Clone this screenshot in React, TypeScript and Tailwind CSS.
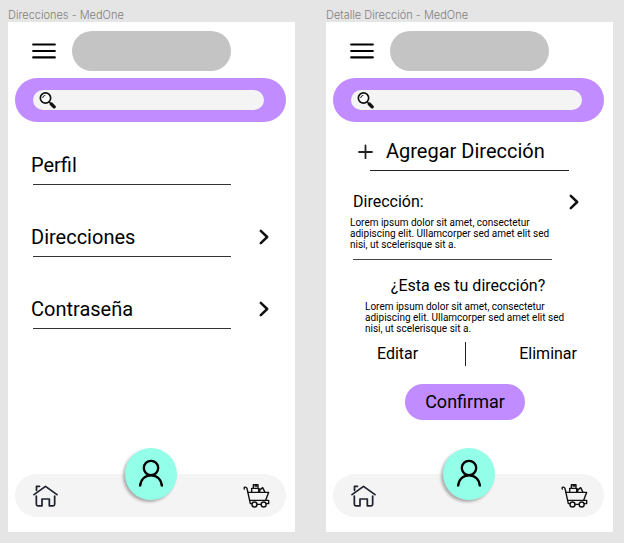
import type { ReactNode } from "react";

function MenuIcon() {
  return (
    <svg className="h-4 w-6" viewBox="0 0 24 16" fill="none" stroke="#000" strokeWidth="2.2" strokeLinecap="round" aria-hidden="true">
      <path d="M1.2 1.5H22.8M1.2 8H22.8M1.2 14.4H22.8" />
    </svg>
  );
}

function SearchIcon() {
  return (
    <svg className="size-[17px] shrink-0" viewBox="27 18 51 51" fill="none" stroke="#111" aria-hidden="true">
      <circle cx="46.500" cy="36" r="15.500" strokeWidth="5" fill="#fff" />
      <path d="M38 36A9 9 0 0 1 46 28" strokeWidth="3" />
      <path d="M58 48L63 53" strokeWidth="4" />
      <path d="M64 54L72.500 62.500" strokeWidth="10" strokeLinecap="round" />
    </svg>
  );
}

function HomeIcon() {
  return (
    <svg className="h-[22px] w-[25px]" viewBox="24 30 75 66" fill="none" stroke="#20232f" strokeWidth="5.200" strokeLinecap="round" strokeLinejoin="round" aria-hidden="true">
      <path d="M27 59L61.500 34L96 59" />
      <path d="M34.500 46V34H43.500" />
      <path d="M34 63V88Q34 92.500 38.500 92.500H51V72H73V92.500H84.500Q89 92.500 89 88V63" />
    </svg>
  );
}

function CartIcon() {
  return (
    <svg className="h-[25px] w-[27px]" viewBox="20 24 81 75" fill="none" stroke="#111" strokeWidth="4.200" strokeLinecap="round" strokeLinejoin="round" aria-hidden="true">
      <path d="M24 42C21 36 29 34 32 40L42 86H47" />
      <path d="M34.500 52H97L88 76H40" />
      <path d="M88 76H97V86H90M62 88H74" />
      <circle cx="54.500" cy="88.500" r="7.500" />
      <circle cx="82" cy="88.500" r="7.500" />
      <path d="M46 51V40H67V51M51 39V29H65V39M56 33H61M69 46L79 38L85 50M70 51V42" />
    </svg>
  );
}

function UserIcon() {
  return (
    <svg className="h-[30px] w-[26px]" viewBox="0 0 26 30" fill="none" stroke="#000" strokeWidth="2.300" aria-hidden="true">
      <circle cx="13" cy="9" r="7.200" />
      <path d="M2 27.500C2.500 20.500 7 16.300 13 16.300S23.500 20.500 24 27.500" />
    </svg>
  );
}

function Chevron() {
  return (
    <svg className="h-4 w-[10px]" viewBox="0 0 10 16" fill="none" stroke="#111" strokeWidth="2.500" strokeLinecap="round" strokeLinejoin="round" aria-hidden="true">
      <path d="M1.800 1.800L8.200 8L1.800 14.200" />
    </svg>
  );
}

function PlusIcon() {
  return (
    <svg className="size-4" viewBox="0 0 16 16" fill="none" stroke="#222" strokeWidth="1.800" strokeLinecap="round" aria-hidden="true">
      <path d="M7.500 2.500V15.200M1 9H14" />
    </svg>
  );
}

function Screen({ id, title, children }: { id: string; title: string; children: ReactNode }) {
  return (
    <section className="flex min-w-0 flex-col" aria-labelledby={`${id}-title`}>
      <h2 id={`${id}-title`} className="font-['Inter',sans-serif] text-[11px] leading-[14px] font-light text-[#808080]">
        {title}
      </h2>
      <div className="flex flex-1 flex-col bg-white pt-[9px] pb-[15px]">
        <header>
          <div className="flex items-center gap-4 pr-16 pl-6">
            <button type="button" aria-label="Menú">
              <MenuIcon />
            </button>
            <div className="h-10 flex-1 rounded-full bg-[#c4c4c4]" />
          </div>
          <form role="search" className="mt-[7px] mr-[9px] ml-[7px] rounded-full bg-[#c08cff] py-3 pr-[22px] pl-[18px]">
            <label htmlFor={`${id}-search`} className="flex h-5 items-center rounded-full bg-[#f4f4f4] pl-[6px]">
              <SearchIcon />
              <input id={`${id}-search`} type="search" aria-label="Buscar" className="min-w-0 flex-1 bg-transparent px-2 text-[11px] outline-none" />
            </label>
          </form>
        </header>
        <main className="flex-1">{children}</main>
        <nav className="relative mr-[9px] ml-[7px] flex h-[43px] items-center justify-between rounded-full bg-[#f4f4f4] pr-4 pl-[18px]">
          <a href="#inicio" aria-label="Inicio">
            <HomeIcon />
          </a>
          <a
            href="#perfil"
            aria-label="Perfil"
            className="absolute inset-x-0 bottom-[17px] mx-auto flex size-[52px] items-center justify-center rounded-full bg-[#94ffe8] shadow-[-2px_2px_3px_rgba(0,0,0,0.3)]"
          >
            <UserIcon />
          </a>
          <a href="#carrito" aria-label="Carrito">
            <CartIcon />
          </a>
        </nav>
      </div>
    </section>
  );
}

const options = [
  { label: "Perfil", arrow: false },
  { label: "Direcciones", arrow: true },
  { label: "Contraseña", arrow: true },
];

const address = "Lorem ipsum dolor sit amet, consectetur adipiscing elit. Ullamcorper sed amet elit sed nisi, ut scelerisque sit a.";

export default function App() {
  return (
    <div className="grid min-h-screen grid-cols-2 gap-[31px] bg-[#e5e5e5] pt-2 pr-[11px] pb-[11px] pl-2 font-['Roboto',sans-serif] text-black">
      <Screen id="direcciones" title="Direcciones - MedOne">
        <ul className="flex flex-col gap-10 pt-[31px] pr-[26px] pl-[23px]">
          {options.map((option) => (
            <li key={option.label}>
              <a href={`#${option.label}`} className="flex items-center justify-between text-xl leading-6">
                {option.label}
                {option.arrow && <Chevron />}
              </a>
              <div className="mt-[7px] ml-[2px] h-px w-5/6 bg-[#333]" />
            </li>
          ))}
        </ul>
      </Screen>

      <Screen id="detalle" title="Detalle Dirección - MedOne">
        <div className="pt-[17px] pr-11 pl-8">
          <button type="button" className="flex items-center gap-3 text-xl leading-6">
            <PlusIcon />
            Agregar Dirección
          </button>
          <div className="mt-[7px] ml-3 h-px bg-[#222]" />
        </div>

        <div className="mt-[21px] pr-[34px] pl-6">
          <a href="#direccion" className="flex items-center justify-between pl-[3px] text-base leading-5">
            Dirección:
            <Chevron />
          </a>
          <p className="mt-[5px] max-w-[204px] text-[10px] leading-[11px]">{address}</p>
          <div className="mt-[9px] mr-[27px] ml-[3px] h-px bg-[#444]" />
        </div>

        <div className="mt-4 pr-9 pl-[27px]">
          <h3 className="pl-[6px] text-center text-base leading-5">¿Esta es tu dirección?</h3>
          <p className="mt-[5px] ml-3 max-w-[204px] text-[10px] leading-[11px]">{address}</p>
          <div className="mt-2 grid grid-cols-[1fr_1px_1fr] items-center text-base leading-5">
            <button type="button" className="pl-6 text-left">
              Editar
            </button>
            <div className="h-6 bg-[#222]" />
            <button type="button" className="text-right">
              Eliminar
            </button>
          </div>
          <button type="button" className="mx-auto mt-[18px] block h-9 w-[120px] rounded-full bg-[#c08cff] text-lg leading-6">
            Confirmar
          </button>
        </div>
      </Screen>
    </div>
  );
}
